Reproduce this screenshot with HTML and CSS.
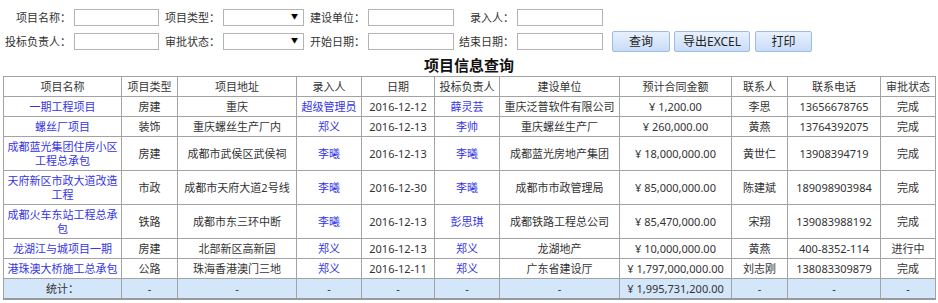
FILE: index.html
```html
<!doctype html>
<html lang="zh">
<head>
  <meta charset="utf-8">
  <title>项目信息查询</title>
  <link rel="stylesheet" href="styles.css">
</head>
<body>

<form class="search">
  <div class="search-row">
    <label class="lbl w1">项目名称：</label><input type="text" class="txt">
    <label class="lbl w2">项目类型：</label><span class="sel"><select></select></span>
    <label class="lbl w2">建设单位：</label><input type="text" class="txt wide">
    <label class="lbl w3">录入人：</label><input type="text" class="txt wide">
  </div>
  <div class="search-row">
    <label class="lbl w1">投标负责人：</label><input type="text" class="txt">
    <label class="lbl w2">审批状态：</label><span class="sel"><select></select></span>
    <label class="lbl w2">开始日期：</label><input type="text" class="txt wide">
    <label class="lbl w3">结束日期：</label><input type="text" class="txt wide">
    <button type="button" class="btn first">查询</button>
    <button type="button" class="btn excel">导出EXCEL</button>
    <button type="button" class="btn">打印</button>
  </div>
</form>

<h1 class="title">项目信息查询</h1>

<table class="results">
  <colgroup>
    <col style="width:118px"><col style="width:56px"><col style="width:119px"><col style="width:65px">
    <col style="width:73px"><col style="width:65px"><col style="width:120px"><col style="width:112px">
    <col style="width:56px"><col style="width:93px"><col style="width:55px">
  </colgroup>
  <tr>
    <th>项目名称</th><th>项目类型</th><th>项目地址</th><th>录入人</th><th>日期</th><th>投标负责人</th>
    <th>建设单位</th><th>预计合同金额</th><th>联系人</th><th>联系电话</th><th>审批状态</th>
  </tr>
  <tr>
    <td><a href="#">一期工程项目</a></td><td>房建</td><td>重庆</td><td><a href="#">超级管理员</a></td><td>2016-12-12</td><td><a href="#">薛灵芸</a></td>
    <td>重庆泛普软件有限公司</td><td>¥ 1,200.00</td><td>李思</td><td>13656678765</td><td>完成</td>
  </tr>
  <tr>
    <td><a href="#">螺丝厂项目</a></td><td>装饰</td><td>重庆螺丝生产厂内</td><td><a href="#">郑义</a></td><td>2016-12-13</td><td><a href="#">李帅</a></td>
    <td>重庆螺丝生产厂</td><td>¥ 260,000.00</td><td>黄燕</td><td>13764392075</td><td>完成</td>
  </tr>
  <tr>
    <td><a href="#">成都蓝光集团住房小区工程总承包</a></td><td>房建</td><td>成都市武侯区武侯祠</td><td><a href="#">李曦</a></td><td>2016-12-13</td><td><a href="#">李曦</a></td>
    <td>成都蓝光房地产集团</td><td>¥ 18,000,000.00</td><td>黄世仁</td><td>13908394719</td><td>完成</td>
  </tr>
  <tr>
    <td><a href="#">天府新区市政大道改造工程</a></td><td>市政</td><td>成都市天府大道2号线</td><td><a href="#">李曦</a></td><td>2016-12-30</td><td><a href="#">李曦</a></td>
    <td>成都市市政管理局</td><td>¥ 85,000,000.00</td><td>陈建斌</td><td>189098903984</td><td>完成</td>
  </tr>
  <tr>
    <td><a href="#">成都火车东站工程总承包</a></td><td>铁路</td><td>成都市东三环中断</td><td><a href="#">李曦</a></td><td>2016-12-13</td><td><a href="#">彭思琪</a></td>
    <td>成都铁路工程总公司</td><td>¥ 85,470,000.00</td><td>宋翔</td><td>139083988192</td><td>完成</td>
  </tr>
  <tr>
    <td><a href="#">龙湖江与城项目一期</a></td><td>房建</td><td>北部新区高新园</td><td><a href="#">郑义</a></td><td>2016-12-13</td><td><a href="#">郑义</a></td>
    <td>龙湖地产</td><td>¥ 10,000,000.00</td><td>黄燕</td><td>400-8352-114</td><td>进行中</td>
  </tr>
  <tr>
    <td><a href="#">港珠澳大桥施工总承包</a></td><td>公路</td><td>珠海香港澳门三地</td><td><a href="#">郑义</a></td><td>2016-12-11</td><td><a href="#">郑义</a></td>
    <td>广东省建设厅</td><td>¥ 1,797,000,000.00</td><td>刘志刚</td><td>138083309879</td><td>完成</td>
  </tr>
  <tr class="total">
    <td>统计：</td><td>-</td><td>-</td><td>-</td><td>-</td><td>-</td>
    <td>-</td><td>¥ 1,995,731,200.00</td><td>-</td><td>-</td><td>-</td>
  </tr>
</table>

<div class="pager"><span class="pager-btn"></span></div>

</body>
</html>
```

FILE: styles.css
```css
body {
    margin: 0;
    font-family: "Noto Sans", "Noto Sans CJK SC", sans-serif;
    font-size: 11px;
    color: #333;
    background: #fff;
}

.search {
    padding: 6px 0 0 3px;
}
.search-row {
    display: flex;
    align-items: center;
    height: 22px;
    margin-bottom: 2px;
}
.lbl {
    text-align: right;
    white-space: nowrap;
    margin-right: 3px;
}
.lbl.w1 { width: 68px; }
.lbl.w2 { width: 61px; }
.lbl.w3 { width: 60px; }

.txt {
    box-sizing: border-box;
    width: 85px;
    height: 17px;
    margin: 0;
    padding: 0 2px;
    border: 1px solid #b4b4b4;
    background: #fff;
    font: inherit;
}
.txt.wide {
    width: 86px;
}

.sel {
    position: relative;
    display: inline-block;
    width: 81px;
    height: 17px;
}
.sel select {
    appearance: none;
    -webkit-appearance: none;
    box-sizing: border-box;
    width: 81px;
    height: 17px;
    margin: 0;
    border: 1px solid #b4b4b4;
    background: #fff;
    border-radius: 0;
}
.sel::after {
    content: "\25BC";
    position: absolute;
    right: 6px;
    top: 3px;
    font-size: 7px;
    line-height: 10px;
    color: #000;
}

.btn {
    box-sizing: border-box;
    height: 21px;
    width: 57px;
    margin: 0 0 0 4px;
    padding: 0;
    border: 1px solid #9cbde8;
    border-radius: 2px;
    background: linear-gradient(#e8f1fd, #c9dcf6);
    font-family: "Noto Sans", "Noto Sans CJK SC", sans-serif;
    font-size: 12px;
    color: #222;
}
.btn.first {
    width: 58px;
    margin-left: 9px;
}
.btn.excel {
    width: 76px;
    margin-right: 1px;
}

.title {
    margin: 1px 0 0;
    font-size: 15px;
    line-height: 22px;
    font-weight: bold;
    text-align: center;
    color: #111;
}

table.results {
    table-layout: fixed;
    width: 932px;
    margin: 0 3px;
    border-collapse: collapse;
    border: 1px solid #8c8c8c;
}
table.results th,
table.results td {
    border: 1px solid #a3a3a3;
    padding: 3px 2px 2px;
    line-height: 14px;
    text-align: center;
    font-weight: normal;
    color: #333;
}
table.results a {
    color: #3535e6;
    text-decoration: none;
}
tr.total td {
    background-color: #d4e6fa;
}
tr.total {
    border-bottom: 2px solid #999;
}

.pager {
    padding: 5px 0 0 457px;
}
.pager-btn {
    display: block;
    width: 41px;
    height: 12px;
    border-radius: 2px;
    background: #e2e2e2;
}
```
